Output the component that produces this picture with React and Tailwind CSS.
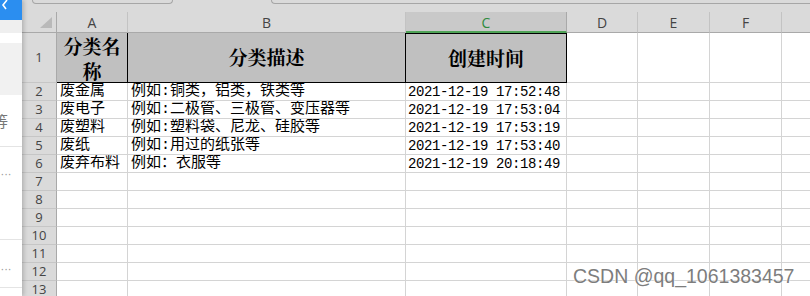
import React from "react";

const cols = ["A", "B", "C", "D", "E", "F", "G"];

const records = [
  ["废金属", "例如:铜类，铝类，铁类等", "2021-12-19 17:52:48"],
  ["废电子", "例如:二极管、三极管、变压器等", "2021-12-19 17:53:04"],
  ["废塑料", "例如:塑料袋、尼龙、硅胶等", "2021-12-19 17:53:19"],
  ["废纸", "例如:用过的纸张等", "2021-12-19 17:53:40"],
  ["废弃布料", "例如：衣服等", "2021-12-19 20:18:49"],
];

const cjk = "font-['Liberation_Mono','Noto_Sans_CJK_SC',monospace]";
const ui = "font-['Open_Sans','Liberation_Sans',sans-serif]";

function SideStrip() {
  return (
    <div className="relative z-10 flex w-[22px] shrink-0 flex-col overflow-hidden bg-white shadow-[2px_0_4px_rgba(0,0,0,0.18)]">
      <div className="h-[20px] bg-[#2b8ef0]">
        <svg width="22" height="20" viewBox="0 0 22 20">
          <path d="M7 0 L3 5 L6 9" fill="none" stroke="#fff" strokeWidth="1.6" />
        </svg>
      </div>
      <div className="h-[13px] bg-[#efefef]" />
      <div className="h-[10px] bg-white" />
      <div className="h-[52px] bg-[#f1f1f1]" />
      <div className="flex h-[52px] items-center border-b border-[#e4e4e4]">
        <span className="-ml-[7px] font-['Noto_Sans_CJK_SC',sans-serif] text-[15px] leading-none text-[#777]">等</span>
      </div>
      <div className="flex h-[93px] items-start border-b border-[#e4e4e4] pt-[22px]">
        <span className="pl-[1px] text-[10px] leading-none tracking-[1px] text-[#9a9a9a]">···</span>
      </div>
      <div className="flex h-[48px] items-start border-b border-[#e4e4e4] pt-[24px]">
        <span className="pl-[1px] text-[10px] leading-none tracking-[1px] text-[#9a9a9a]">···</span>
      </div>
    </div>
  );
}

function TopBand() {
  return (
    <div className="flex h-[12px] items-start bg-[#dadada]">
      <div className="ml-[10px] h-[4px] w-[147px] rounded-b-[5px] border-x border-b border-[#a6a6a6]" />
      <div className="ml-[98px] h-[4px] w-[560px] rounded-bl-[5px] border-b border-l border-[#a6a6a6]" />
    </div>
  );
}

function ColHeader({ letter }) {
  const active = letter === "C";
  return (
    <div
      className={
        active
          ? `flex items-center justify-center border-r border-[#a9a9a9] border-b-2 border-b-[#4fa357] bg-[#c9c9c9] pt-[1px] text-[14px] text-[#2e8b3e] ${ui}`
          : `flex items-center justify-center border-r border-b border-r-[#c3c3c3] border-b-[#a9a9a9] bg-[#dadada] text-[14px] text-[#444] ${ui}`
      }
    >
      {letter}
    </div>
  );
}

function RowHeader({ n }) {
  return (
    <div className={`flex items-center justify-center border-r border-b border-r-[#a9a9a9] border-b-[#c6c6c6] bg-[#dadada] text-[13px] leading-none text-[#444] ${ui}`}>
      {n}
    </div>
  );
}

const grid = "border-r border-b border-[#d4d4d4]";

export default function App() {
  return (
    <div className="flex h-[296px] w-[810px] overflow-hidden bg-white">
      <SideStrip />
      <div className="relative flex-1 overflow-hidden bg-[#dadada]">
        <TopBand />
        <div className="grid grid-cols-[35px_71px_278px_161px_71px_72px_72px_80px] grid-rows-[21px_50px_repeat(12,18px)] bg-white">
          {/* corner */}
          <div className="flex items-end justify-end border-r border-b border-r-[#a9a9a9] border-b-[#a9a9a9] bg-[#dadada] pb-[4px] pr-[4px]">
            <svg width="12" height="11" viewBox="0 0 12 11">
              <polygon points="12,0 12,11 0,11" fill="#b9b9b9" />
            </svg>
          </div>
          {cols.map((c) => (
            <ColHeader key={c} letter={c} />
          ))}

          {/* title row */}
          <RowHeader n={1} />
          <div className="flex items-center justify-center border-r border-b border-black bg-[#c0c0c0] text-center font-['Noto_Serif_CJK_SC','Noto_Sans_CJK_SC',serif] text-[19px] font-bold leading-[25px] text-black">
            分类名
            <br />
            称
          </div>
          <div className="flex items-center justify-center border-r border-b border-black bg-[#c0c0c0] font-['Noto_Serif_CJK_SC','Noto_Sans_CJK_SC',serif] text-[19px] font-bold text-black">
            分类描述
          </div>
          <div className="flex items-center justify-center border border-l-0 border-black bg-[#c0c0c0] font-['Noto_Serif_CJK_SC','Noto_Sans_CJK_SC',serif] text-[19px] font-bold text-black">
            创建时间
          </div>
          {[0, 1, 2, 3].map((i) => (
            <div key={i} className={grid} />
          ))}

          {/* data rows */}
          {Array.from({ length: 12 }, (_, r) => {
            const rec = records[r];
            return (
              <React.Fragment key={r}>
                <RowHeader n={r + 2} />
                <div className={`${grid} overflow-hidden whitespace-nowrap pl-[3px] text-[15px] leading-[17px] text-black ${cjk}`}>
                  {rec ? rec[0] : ""}
                </div>
                <div className={`${grid} overflow-hidden whitespace-nowrap pl-[3px] text-[15px] leading-[17px] text-black ${cjk}`}>
                  {rec ? rec[1] : ""}
                </div>
                <div className={`${grid} overflow-hidden whitespace-nowrap pl-[2px] pt-[1px] font-['Liberation_Mono',monospace] text-[14px] leading-[17px] tracking-[-0.4px] text-black`}>
                  {rec ? rec[2] : ""}
                </div>
                {[0, 1, 2, 3].map((i) => (
                  <div key={i} className={grid} />
                ))}
              </React.Fragment>
            );
          })}
        </div>

        <div className="absolute left-[551px] top-[264px] whitespace-nowrap font-['Liberation_Sans',Arial,sans-serif] text-[19.5px] leading-[24px] text-[#7d7d7d] [text-shadow:0_0_1px_#fff,0_0_2px_#fff]">
          CSDN @qq_1061383457
        </div>
      </div>
    </div>
  );
}
